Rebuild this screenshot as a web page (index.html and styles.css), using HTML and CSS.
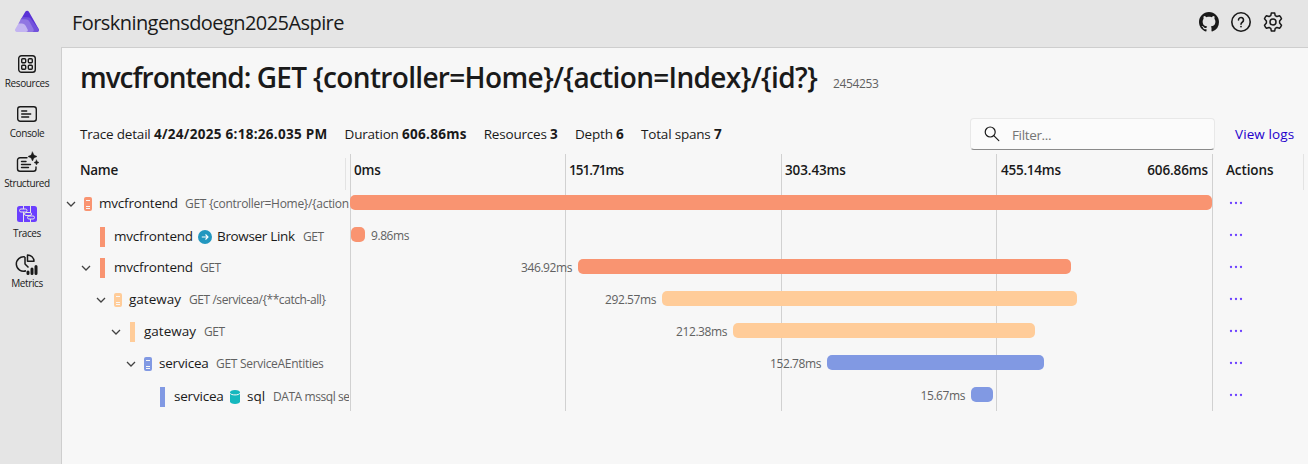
FILE: index.html
```html
<!DOCTYPE html>
<html lang="en">
<head>
<meta charset="utf-8">
<title>Forskningensdoegn2025Aspire</title>
<link rel="stylesheet" href="styles.css">
</head>
<body>
<svg width="0" height="0" class="defs">
  <symbol id="chev" viewBox="0 0 10 6"><path d="M1 1l4 4 4-4" fill="none" stroke="#424242" stroke-width="1.3"/></symbol>
  <symbol id="server" viewBox="0 0 8 14"><rect width="8" height="14" rx="2" fill="currentColor"/><path d="M2 3.5h4M2 9.5h4M2 11.5h4" stroke="#f7f7f7" stroke-width="1"/></symbol>
  <symbol id="dots" viewBox="0 0 14 4"><g fill="#6b3fff"><circle cx="2" cy="2" r="1.15"/><circle cx="7" cy="2" r="1.15"/><circle cx="12" cy="2" r="1.15"/></g></symbol>
</svg>
<div class="app">
  <aside class="nav">
    <a class="brand"><svg width="26" height="24" viewBox="0 0 26 24">
      <path d="M11.300 1.800a2.100 2.100 0 0 1 3.600 0l9.800 17.200a2 2 0 0 1-1.800 3H14L6.500 10z" fill="#5a32d6"/>
      <path d="M7 9.500l1.200-2.200h5.600c2 0 3 1 3.900 2.700L24.900 19.400a2 2 0 0 1-2 2.600H12z" fill="#7455dd" opacity=".9"/>
      <path d="M4.500 13.500l2.300-4.200h4.400c2.500 0 3.600 1.200 4.600 3L19.500 19c.7 1.400 0 3-1.500 3h-8z" fill="#9076e3"/>
      <path d="M1.300 19l3.200-5.600h3.300c2.100 0 3.100 1 4 2.600l1.700 3.200c.8 1.500 0 2.800-1.500 2.800H3a2 2 0 0 1-1.700-3z" fill="#c3b4f1"/></svg></a>
    <a class="nav-item"><svg width="20" height="20" viewBox="0 0 20 20" fill="none" stroke="#1a1a1a" stroke-width="1.400"><rect x="1.700" y="1.700" width="16.600" height="16.600" rx="2.800"/><rect x="4.700" y="4.700" width="4" height="4" rx="1"/><rect x="11.300" y="4.700" width="4" height="4" rx="1"/><rect x="4.700" y="11.300" width="4" height="4" rx="1"/><rect x="11.300" y="11.300" width="4" height="4" rx="1"/></svg><span>Resources</span></a>
    <a class="nav-item"><svg width="20" height="20" viewBox="0 0 20 20" fill="none" stroke="#1a1a1a" stroke-width="1.400" stroke-linecap="round"><rect x=".7" y="2.700" width="18.600" height="14.600" rx="2.500"/><path d="M4.700 7h5M4.700 10h9M4.700 13h7"/></svg><span>Console</span></a>
    <a class="nav-item"><svg class="big" width="22" height="22" viewBox="0 0 22 22" fill="none" stroke="#1a1a1a" stroke-width="1.400" stroke-linecap="round"><path d="M11 4.700H4a2.500 2.500 0 0 0-2.500 2.500v8.600a2.500 2.500 0 0 0 2.500 2.500h13.500a2.500 2.500 0 0 0 2.500-2.500V14M5.500 8.500h4.500M5.500 11.500h9M5.500 14.500h7"/><path d="M16.500-1l1.400 3.100 3.100 1.400-3.100 1.400-1.400 3.100-1.400-3.100L12 3.500l3.100-1.400zM20.500 7l.8 1.700 1.700.8-1.700.8-.8 1.700-.8-1.700-1.700-.8 1.700-.8z" fill="#1a1a1a" stroke-width=".5"/></svg><span>Structured</span></a>
    <a class="nav-item active"><svg width="20" height="20" viewBox="0 0 20 20"><rect y="2" width="20" height="16" rx="2.500" fill="#6b3fff"/><g fill="#6b3fff" stroke="#e5e5e5" stroke-width="1"><path d="M6.500 2v16M13.500 2v16"/><rect x="2.500" y="5" width="7.500" height="3" rx="1.500"/><rect x="7.500" y="8.500" width="7" height="3" rx="1.500"/><rect x="10.500" y="12" width="7" height="3" rx="1.500"/></g></svg><span>Traces</span></a>
    <a class="nav-item"><svg class="big" width="22" height="22" viewBox="0 0 22 22"><path d="M9 4A7.200 7.200 0 1 0 10 17.800M9 4v7l3.500 3.500M11.500 2v6.300h6.500a6.400 6.400 0 0 0-6.500-6.300z" fill="none" stroke="#1a1a1a" stroke-width="1.500" stroke-linejoin="round"/><path d="M12 19v1.500M16 16v4.500M20 13.500v7" stroke="#1a1a1a" stroke-width="3" stroke-linecap="round"/></svg><span>Metrics</span></a>
  </aside>
  <div class="shell">
    <header class="top">
      <span class="app-name">Forskningensdoegn2025Aspire</span>
      <div class="tools">
        <svg width="20" height="20" viewBox="0 0 16 16" fill="#1a1a1a"><path d="M8 0C3.580 0 0 3.580 0 8c0 3.540 2.290 6.530 5.470 7.590.4.070.55-.17.55-.38 0-.19-.01-.82-.01-1.490-2.010.37-2.530-.49-2.690-.94-.09-.23-.48-.94-.82-1.130-.28-.15-.68-.52-.01-.53.63-.01 1.080.58 1.230.82.72 1.210 1.870.87 2.330.66.07-.52.28-.87.51-1.070-1.780-.2-3.640-.89-3.640-3.950 0-.87.31-1.590.82-2.150-.08-.2-.36-1.020.08-2.120 0 0 .67-.21 2.200.82.64-.18 1.320-.27 2-.27s1.360.09 2 .27c1.530-1.040 2.200-.82 2.200-.82.44 1.100.16 1.920.08 2.120.51.56.82 1.270.82 2.150 0 3.070-1.870 3.750-3.650 3.950.29.25.54.73.54 1.480 0 1.070-.01 1.930-.01 2.200 0 .21.15.46.55.38A8.010 8.010 0 0 0 16 8c0-4.420-3.580-8-8-8z"/></svg>
        <svg width="20" height="20" viewBox="0 0 20 20" fill="none" stroke="#1a1a1a" stroke-width="1.600"><circle cx="10" cy="10" r="9.200"/><path d="M7.500 8a2.500 2.500 0 1 1 4 2c-.9.700-1.500 1.200-1.500 2.300" stroke-linecap="round"/><circle cx="10" cy="14.600" r=".9" fill="#1a1a1a" stroke="none"/></svg>
        <svg width="20" height="20" viewBox="0 0 20 20" fill="none" stroke="#1a1a1a" stroke-width="1.500" stroke-linejoin="round"><path d="M8.300 1.100Q10 .7 11.700 1.100L12.200 3.600 13.900 4.500 16.600 3.700Q17.900 5.100 18.500 6.800L16.600 8.900V11.100L18.500 13.200Q17.900 14.900 16.600 16.300L13.900 15.500 12.200 16.400 11.700 18.900Q10 19.300 8.300 18.900L7.800 16.400 6.100 15.500 3.400 16.300Q2.100 14.900 1.500 13.200L3.400 11.100V8.900L1.500 6.800Q2.100 5.100 3.400 3.700L6.100 4.500 7.800 3.600z"/><circle cx="10" cy="10" r="3"/></svg>
      </div>
    </header>
    <main class="page">
      <h1><span>mvcfrontend: </span>GET {controller=Home}/{action=Index}/{id?}<small>2454253</small></h1>
      <div class="toolbar">
        <div class="facts"><span>Trace detail <b>4/24/2025 6:18:26.035 PM</b></span><span>Duration <b>606.86ms</b></span><span>Resources <b>3</b></span><span>Depth <b>6</b></span><span>Total spans <b>7</b></span></div>
        <div class="filter"><svg width="16" height="16" viewBox="0 0 16 16" fill="none" stroke="#1a1a1a" stroke-width="1.200"><circle cx="6.200" cy="6" r="5"/><path d="M9.800 9.600l5 5" stroke-linecap="round"/></svg><span>Filter...</span></div>
        <a class="logs">View logs</a>
      </div>
      <div class="row head">
        <div class="name">Name</div>
        <div class="time"><span>0ms</span><span class="tight">151.71ms</span><span>303.43ms</span><span class="snug">455.14ms</span><span class="last">606.86ms</span></div>
        <div class="act">Actions</div>
      </div>
      <div class="row">
        <div class="name d0"><svg class="chev"><use href="#chev"/></svg><svg class="server orange"><use href="#server"/></svg><span class="res">mvcfrontend</span><span class="op wide">GET {controller=Home}/{action</span></div>
        <div class="time"><i class="bar orange" style="width:862px"></i></div>
        <div class="act"><svg class="dots"><use href="#dots"/></svg></div>
      </div>
      <div class="row">
        <div class="name d1 leaf"><i class="mark orange"></i><span class="res">mvcfrontend</span><svg class="peer" viewBox="0 0 14 14"><circle cx="7" cy="7" r="7" fill="#2297bf"/><path d="M3.800 7h6M7.500 4.500L10 7 7.500 9.500" fill="none" stroke="#fff" stroke-width="1.100"/></svg><span class="res link">Browser Link</span><span class="op">GET</span></div>
        <div class="time"><span class="lead" style="width:1px"></span><i class="bar orange" style="width:14px"></i><span class="after">9.86ms</span></div>
        <div class="act"><svg class="dots"><use href="#dots"/></svg></div>
      </div>
      <div class="row">
        <div class="name d1"><svg class="chev"><use href="#chev"/></svg><i class="mark orange"></i><span class="res">mvcfrontend</span><span class="op">GET</span></div>
        <div class="time"><span class="lead" style="width:228px">346.92ms</span><i class="bar orange" style="width:493px"></i></div>
        <div class="act"><svg class="dots"><use href="#dots"/></svg></div>
      </div>
      <div class="row">
        <div class="name d2"><svg class="chev"><use href="#chev"/></svg><svg class="server peach"><use href="#server"/></svg><span class="res gw">gateway</span><span class="op">GET /servicea/{**catch-all}</span></div>
        <div class="time"><span class="lead" style="width:312px">292.57ms</span><i class="bar peach" style="width:415px"></i></div>
        <div class="act"><svg class="dots"><use href="#dots"/></svg></div>
      </div>
      <div class="row">
        <div class="name d3"><svg class="chev"><use href="#chev"/></svg><i class="mark peach"></i><span class="res gw">gateway</span><span class="op">GET</span></div>
        <div class="time"><span class="lead" style="width:383px">212.38ms</span><i class="bar peach" style="width:302px"></i></div>
        <div class="act"><svg class="dots"><use href="#dots"/></svg></div>
      </div>
      <div class="row">
        <div class="name d4"><svg class="chev"><use href="#chev"/></svg><svg class="server blue"><use href="#server"/></svg><span class="res sv">servicea</span><span class="op wide">GET ServiceAEntities</span></div>
        <div class="time"><span class="lead" style="width:477px">152.78ms</span><i class="bar blue" style="width:217px"></i></div>
        <div class="act"><svg class="dots"><use href="#dots"/></svg></div>
      </div>
      <div class="row">
        <div class="name d5 leaf"><i class="mark blue"></i><span class="res sv">servicea</span><svg class="db" viewBox="0 0 10 14"><path d="M0 2.500v9C0 12.900 2.200 14 5 14s5-1.100 5-2.500v-9z" fill="#15b8be"/><ellipse cx="5" cy="2.500" rx="5" ry="2.500" fill="#15b8be"/><path d="M0 3.200c.8 2.300 9.200 2.300 10 0" fill="none" stroke="#f7f7f7"/></svg><span class="res sql">sql</span><span class="op">DATA mssql se</span></div>
        <div class="time"><span class="lead" style="width:621px">15.67ms</span><i class="bar blue" style="width:22px"></i></div>
        <div class="act"><svg class="dots"><use href="#dots"/></svg></div>
      </div>
    </main>
  </div>
</div>
</body>
</html>
```
FILE: styles.css
```css
* { box-sizing: border-box; }
body { margin: 0; background: #e5e5e5; color: #1a1a1a; font: 14px/20px "Open Sans", "Noto Sans", sans-serif; overflow: hidden; }
.defs { display: none; }
.app { display: flex; width: 1308px; height: 464px; }
.nav { width: 61px; flex: none; display: flex; flex-direction: column; }
.brand { height: 48px; padding: 10px 0 0 14px; }
.brand svg { display: block; }
.nav-item { width: 54px; height: 50px; padding-top: 5px; display: flex; flex-direction: column; align-items: center; font-size: 10px; line-height: 14px; letter-spacing: -.4px; white-space: nowrap; }
.nav-item svg { flex: none; margin: 1px 0 2px; height: 20px; overflow: visible; }
.nav-item svg.big { height: 22px; margin: 0 0 1px; }
.shell { flex: 1; display: flex; flex-direction: column; }
.top { height: 47px; display: flex; justify-content: space-between; align-items: center; padding: 0 25px 3px 11px; }
.app-name { font-size: 20px; letter-spacing: -.57px; padding-top: 2px; }
.tools { display: flex; gap: 12px; }
.page { flex: 1; background: #f7f7f7; border: solid #cecece; border-width: 1px 0 0 1px; overflow: hidden; }
h1 { margin: 0; height: 58px; padding: 10px 0 0 18px; font-size: 28px; line-height: 38px; font-weight: 600; letter-spacing: -.67px; white-space: nowrap; }
h1 span { letter-spacing: -1.030px; }
h1 small { margin-left: 16px; font-size: 12px; font-weight: 400; letter-spacing: -.36px; color: #616161; }
.toolbar { height: 48px; display: flex; align-items: center; padding: 9px 14px 0 18px; }
.facts { width: 890px; flex: none; display: flex; gap: 17px; font-size: 13.500px; white-space: nowrap; letter-spacing: -.2px; margin-bottom: 1px; }
.facts b { letter-spacing: .29px; }
.filter { width: 245px; height: 32px; flex: none; margin-top: -1px; display: flex; align-items: center; gap: 12px; padding: 2px 13px 0; background: #fbfbfb; border: 1px solid #e8e8e8; border-bottom-color: #8a8a8a; border-radius: 4px; color: #757575; font-size: 13.500px; letter-spacing: -.35px; }
.filter svg { margin-top: -3px; }
.logs { margin: 0 0 1px 20px; color: #2400cc; letter-spacing: .1px; white-space: nowrap; font-size: 13.500px; }
.row { display: grid; grid-template-columns: 288px 863px 95px; height: 32px; }
.time { display: flex; align-items: center; padding-bottom: 2px; --line: linear-gradient(#d1d1d1, #d1d1d1); background: var(--line) 0 0, var(--line) 24.940% 0, var(--line) 50% 0, var(--line) 74.940% 0, var(--line) 100% 0; background-size: 1px 100%; background-repeat: no-repeat; }
.head { height: 33px; font-weight: 600; font-size: 13.500px; letter-spacing: -.35px; }
.head .name { padding-left: 18px; border-right: 1px solid #e3e3e3; width: 284px; height: 32px; margin-top: 4px; padding-bottom: 8px; letter-spacing: -.3px; }
.head .time { display: grid; grid-template-columns: 215px 216px 215px 1fr auto; padding-bottom: 4px; letter-spacing: -.12px; }
.head .time span { padding-left: 4px; }
.head .time .tight { letter-spacing: -.95px; }
.head .time .snug { letter-spacing: -.25px; padding-left: 5px; }
.head .time .last { padding-right: 5px; }
.head .act { border-right: 1px solid #e3e3e3; width: 91px; padding: 6px 0 0 13px; letter-spacing: -.1px; }
.name { display: flex; align-items: center; overflow: hidden; white-space: nowrap; width: 287px; }
.row:not(.head) .name { padding-top: 1px; }
.d0 { padding-left: 4px; } .d1 { padding-left: 19px; } .d2 { padding-left: 34px; } .d3 { padding-left: 49px; } .d4 { padding-left: 64px; }
.d1.leaf { padding-left: 38px; } .d5.leaf { padding-left: 98px; }
.row:not(.head) .leaf { padding-top: 3px; }
.chev { width: 10px; height: 6px; flex: none; margin-right: 8px; }
.mark { width: 5px; height: 20px; flex: none; margin: 0 9px 0 1px; }
.leaf .mark { margin-left: 0; }
.server { width: 8px; height: 14px; flex: none; margin-right: 7px; }
.res { flex: none; width: 78px; font-size: 13.500px; letter-spacing: -.2px; padding-bottom: 2px; }
.gw { width: 52px; letter-spacing: 0; } .sv { width: 49px; letter-spacing: -.2px; } .link { width: 78px; letter-spacing: -.33px; } .sql { width: 18px; letter-spacing: 0; }
.op { margin-left: 8px; flex: none; font-size: 12px; color: #616161; letter-spacing: -.43px; }
.op.wide { letter-spacing: -.3px; }
.peer { width: 14px; height: 14px; flex: none; margin: 0 5px 0 6px; }
.db { width: 10px; height: 14px; flex: none; margin: 0 7px; }
.bar { height: 15px; border-radius: 5px; background: currentColor; flex: none; }
.mark { background: currentColor; }
.orange { color: #f99471; } .peach { color: #ffcc99; } .blue { color: #8199e3; }
.lead, .after { flex: none; font-size: 12px; color: #616161; letter-spacing: -.42px; padding-top: 4px; }
.lead { text-align: right; padding-right: 6px; }
.lead:empty { padding: 0; }
.after { padding-left: 6px; }
.act { padding: 0 0 0 16px; }
.dots { width: 14px; height: 4px; display: block; margin-top: 14px; }
```
